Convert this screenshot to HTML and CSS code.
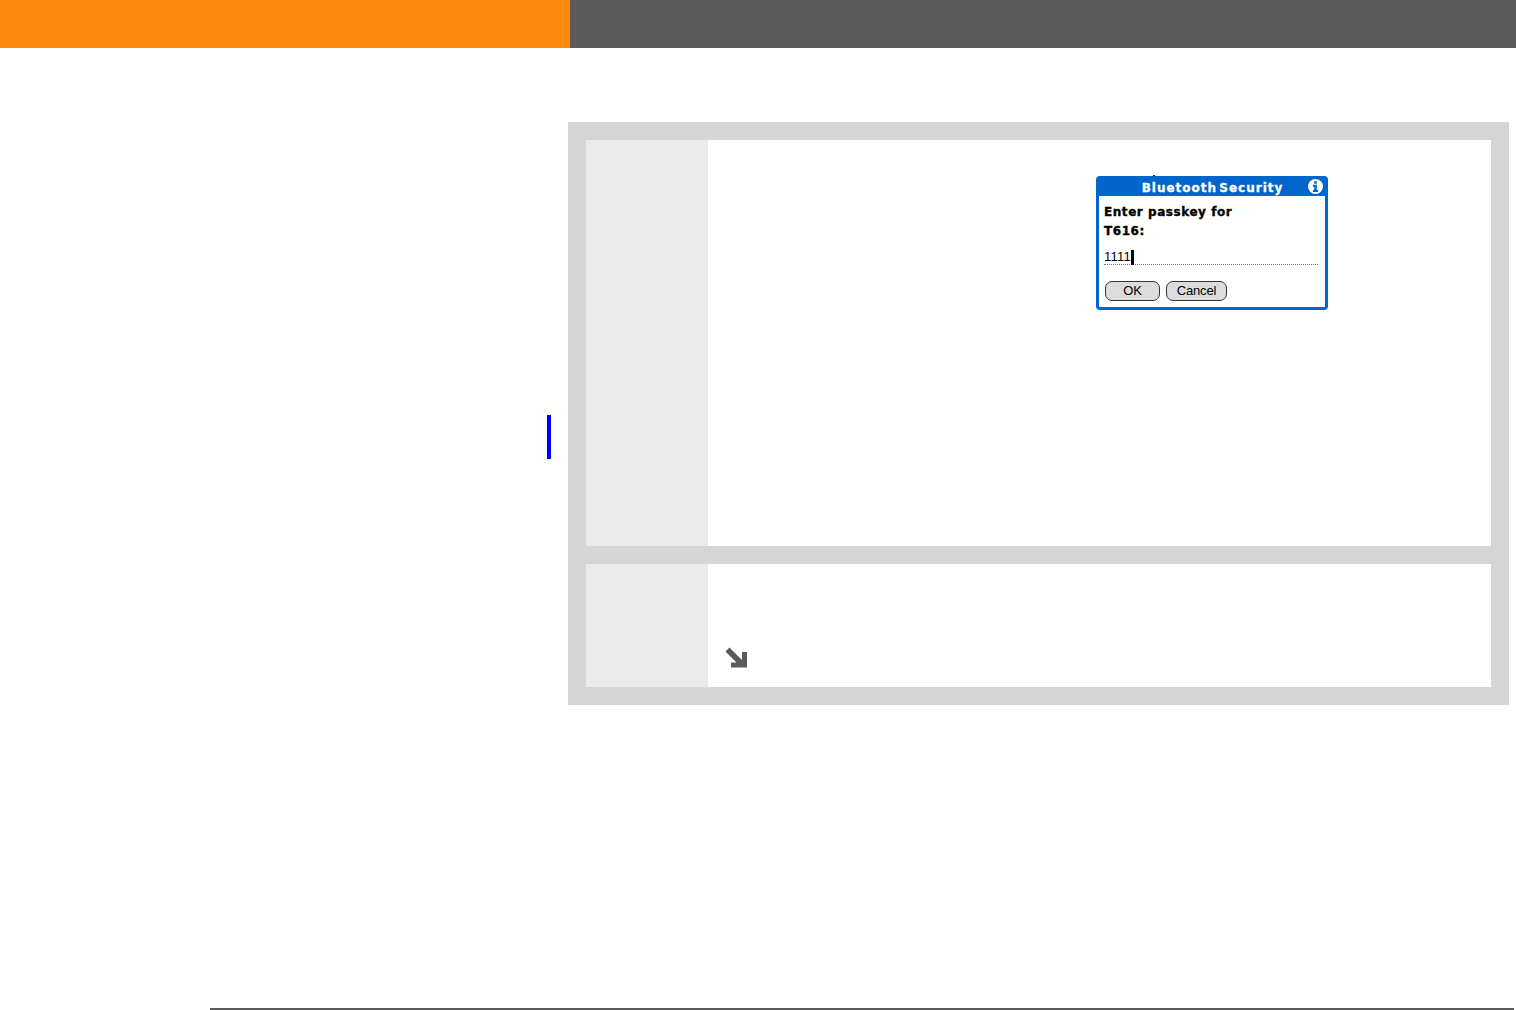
FILE: index.html
```html
<!DOCTYPE html>
<html lang="en">
<head>
<meta charset="utf-8">
<title>Bluetooth Security</title>
<link rel="stylesheet" href="styles.css">
</head>
<body>
<header class="topbar">
  <div class="topbar-accent"></div>
  <div class="topbar-rest"></div>
</header>
<main class="content">
  <div class="margin-col">
    <div class="change-bar"></div>
  </div>
  <section class="panel">
    <div class="step step-tall">
      <div class="step-num"></div>
      <div class="step-body step-body-dialog">
        <div class="dialog">
          <div class="dialog-title">
            <span class="dialog-title-text">Bluetooth Security</span>
            <svg class="info-icon" width="15" height="15" viewBox="0 0 16 16" aria-hidden="true">
              <circle cx="8" cy="8" r="8" fill="#fff"/>
              <path d="M6.6 2.4h2.8v2.6H6.6zM5.2 6.2h4.2v5.6h1.4v2H5.2v-2h1.4V8.2H5.2z" fill="#0066cc"/>
            </svg>
          </div>
          <div class="dialog-body">
            <p class="dialog-label">Enter passkey for<br>T616:</p>
            <div class="field"><span class="field-value">1111</span><span class="caret"></span></div>
            <div class="buttons">
              <span class="btn btn-ok">OK</span>
              <span class="btn btn-cancel">Cancel</span>
            </div>
          </div>
        </div>
      </div>
    </div>
    <div class="step step-short">
      <div class="step-num"></div>
      <div class="step-body step-body-end">
        <svg class="arrow" width="26" height="24" viewBox="0 0 26 24" aria-hidden="true">
          <path d="M1.5 7.5 5.5 3.5 18 16V8H23V23.5H7V18.5H12.5z" fill="#5b5b5b"/>
        </svg>
      </div>
    </div>
  </section>
</main>
<footer class="footer-wrap"><div class="footer-rule"></div></footer>
</body>
</html>
```

FILE: styles.css
```css
* { box-sizing: border-box; }
html, body { margin: 0; padding: 0; }
body {
  width: 1516px;
  height: 1010px;
  overflow: hidden;
  background: #fff;
  display: flex;
  flex-direction: column;
  font-family: "DejaVu Sans", sans-serif;
}
.topbar { display: flex; height: 48px; flex: none; }
.topbar-accent { width: 570px; background: #ff8811; }
.topbar-rest { flex: 1; background: #5b5b5b; }

.content { display: flex; flex: none; padding-top: 74px; }
.margin-col { width: 568px; flex: none; padding: 293px 0 0 547px; }
.change-bar { width: 4px; height: 44px; background: #0000ff; }

.panel {
  width: 941px;
  height: 583px;
  padding: 18px;
  background: #d5d5d5;
  display: flex;
  flex-direction: column;
  gap: 18px;
}
.step { display: flex; background: #fff; }
.step-tall { height: 406px; }
.step-short { height: 123px; }
.step-num { width: 122px; flex: none; background: #eaeaea; }
.step-body { flex: 1; display: flex; }
.step-body-dialog { padding: 36px 0 0 388px; align-items: flex-start; }
.step-body-end { align-items: flex-end; padding: 0 0 19px 16px; }

.dialog {
  position: relative;
  width: 232px;
  height: 134px;
  border: 3px solid #0066cc;
  border-top-width: 0;
  border-radius: 4px;
  background: #fff;
  color: #000;
}
.dialog::before {
  content: "";
  position: absolute;
  left: 54px;
  top: -1px;
  width: 2px;
  height: 1px;
  background: #222;
}
.dialog-title {
  height: 20px;
  background: #0066cc;
  display: flex;
  align-items: center;
  justify-content: center;
  position: relative;
}
.dialog-title-text {
  color: #fff;
  font-size: 12px;
  font-weight: 700;
  letter-spacing: 1px;
  word-spacing: -3px;
  white-space: nowrap;
  -webkit-text-stroke: 0.3px #fff;
  margin-left: 1px;
  margin-top: 4px;
}
.info-icon { position: absolute; right: 2px; top: 3px; }
.dialog-body { padding: 7px 0 0 5px; }
.dialog-label {
  margin: 0;
  font-size: 12px;
  font-weight: 700;
  line-height: 19px;
  letter-spacing: 0.55px;
  height: 38px;
  -webkit-text-stroke: 0.35px #000;
}
.field {
  margin-top: 6px;
  width: 214px;
  height: 18px;
  border-bottom: 1px dotted #777;
  display: flex;
  align-items: flex-start;
  font-family: "Liberation Sans", sans-serif;
  font-size: 13px;
  line-height: 20px;
}
.field-value { letter-spacing: 0.25px; }
.caret { width: 3px; height: 15px; background: #000; margin: 3px 0 0 0; }
.buttons { display: flex; gap: 6px; margin: 16px 0 0 1px; }
.btn {
  height: 20px;
  border: 1px solid #333;
  border-radius: 7px;
  background: #dcdcdc;
  font-family: "Liberation Sans", sans-serif;
  font-size: 13px;
  letter-spacing: -0.2px;
  line-height: 18px;
  text-align: center;
}
.btn-ok { width: 55px; }
.btn-cancel { width: 61px; }
.arrow { display: block; }

.footer-wrap { flex: 1; display: flex; align-items: flex-end; padding: 0 2px 0 210px; }
.footer-rule { flex: 1; height: 2px; background: #5b5b5b; }
```
